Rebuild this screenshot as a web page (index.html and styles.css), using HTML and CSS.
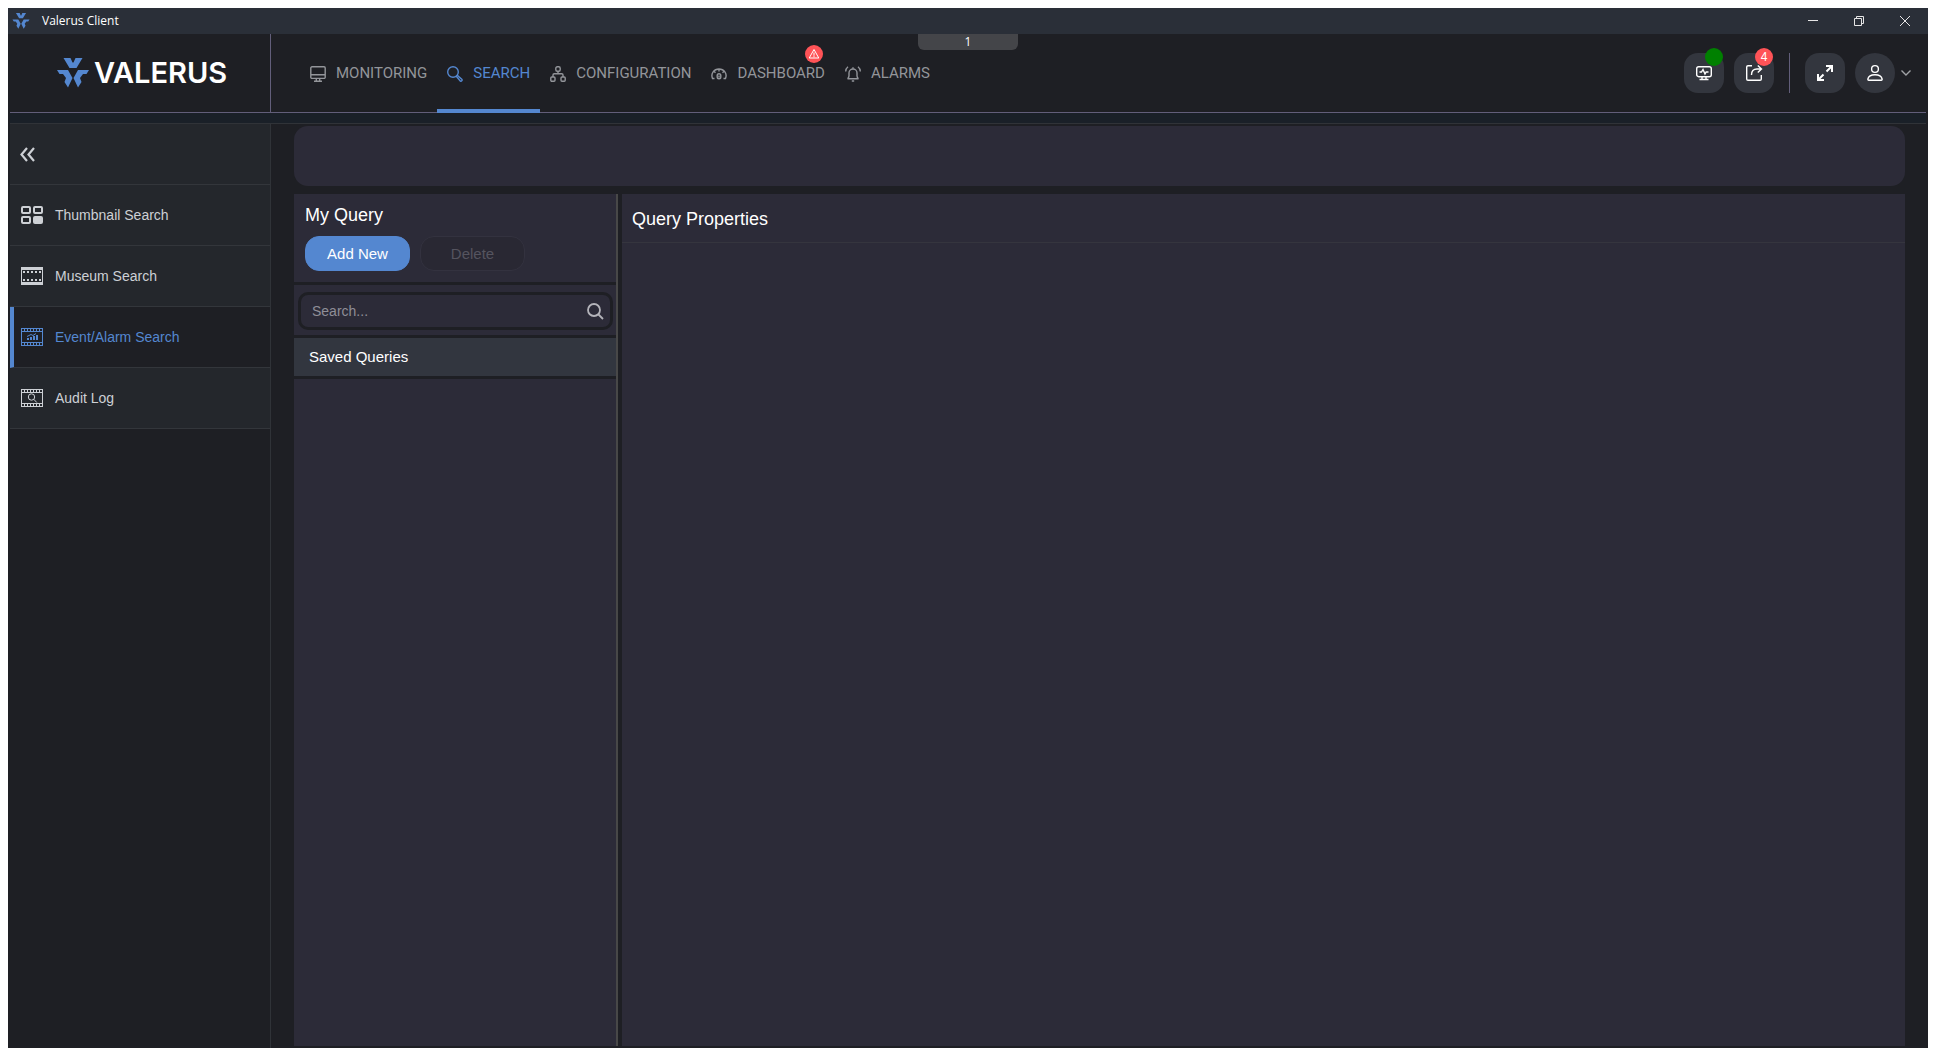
FILE: index.html
```html
<!DOCTYPE html>
<html lang="en">
<head>
<meta charset="utf-8">
<title>Valerus Client</title>
<link rel="stylesheet" href="styles.css">
</head>
<body>
<svg class="defs" aria-hidden="true">
  <symbol id="mark" viewBox="0 0 32 30">
    <path d="M6.500 0h7l2 4.500h1l2-4.500h7l-6 10h-7z M0 12h11l4.500 8-4.500 9.500L7.500 24l1.500-4-3-4H2.500z M32 12H21l-4.500 8 4.500 9.500 3.500-5.500-1.500-4 3-4h3.500z"/>
  </symbol>
  <symbol id="film" viewBox="0 0 22 18">
    <path fill="none" stroke="currentColor" d="M.5 0v18M21.500 0v18M0 .5h22M0 3.500h22M0 14.500h22M0 17.500h22M3.500 0v4M6.500 0v4M9.500 0v4M12.500 0v4M15.500 0v4M18.500 0v4M3.500 14v4M6.500 14v4M9.500 14v4M12.500 14v4M15.500 14v4M18.500 14v4"/>
  </symbol>
</svg>
<div class="window">
  <div class="titlebar">
    <svg class="app-mark"><use href="#mark"/></svg>
    <span class="app-name">Valerus Client</span>
    <div class="window-buttons">
      <button type="button" aria-label="Minimize"><svg width="10" height="10"><path d="M0 4.500h10"/></svg></button>
      <button type="button" aria-label="Restore"><svg width="10" height="10"><path d="M.5 2.500h7v7h-7zM2.500 2.500v-2h7v7h-2"/></svg></button>
      <button type="button" aria-label="Close"><svg width="10" height="10"><path d="M0 0l10 10M10 0L0 10"/></svg></button>
    </div>
  </div>

  <header class="header">
    <div class="brand">
      <svg class="brand-mark"><use href="#mark"/></svg>
      <span class="brand-name">VALERUS</span>
    </div>
    <nav class="tabs">
      <a class="tab" href="#monitoring">
        <svg width="16" height="16"><path d="M2 .8h12a1.200 1.200 0 0 1 1.200 1.200v9.200a1.200 1.200 0 0 1-1.200 1.200H2A1.200 1.200 0 0 1 .8 11.200V2A1.200 1.200 0 0 1 2 .8zM1 8.800h14M6.300 12.500v2.700M9.700 12.500v2.700M4 15.300h8"/></svg>MONITORING</a>
      <a class="tab active" href="#search" aria-current="page">
        <svg width="16" height="16"><circle cx="6" cy="6" r="5.300"/><path d="M9.500 10.500l1-1 4.500 4a1.200 1.200 0 0 1-1.600 1.600z"/></svg>SEARCH</a>
      <a class="tab" href="#configuration">
        <svg width="16" height="16"><rect x="5.800" y=".8" width="4.400" height="4.400" rx="1.500"/><rect x=".8" y="11" width="4.200" height="4.200" rx="1"/><rect x="11" y="11" width="4.200" height="4.200" rx="1"/><path d="M8 5.200v2.500M3 11V9q0-1.300 1.300-1.300h7.400Q13 7.700 13 9v2"/></svg>CONFIGURATION</a>
      <a class="tab" href="#dashboard">
        <svg width="16" height="16"><path d="M3.500 12.500H1.500C-.5 7.500 3 3 8 3s8.500 4.500 6.500 9.500h-2M8 3.500v2M3.200 5.500l1.300 1.200M12.800 5.500l-1.300 1.200"/><rect x="6.200" y="7.800" width="3.600" height="5" rx="1.800"/><path d="M8 9.500v2"/></svg>DASHBOARD
        <span class="badge alert"><svg width="12" height="12"><path d="M6 1.500L10.800 10H1.200zM6 4.500v3.200M6 8.200v1"/></svg></span></a>
      <a class="tab" href="#alarms">
        <svg width="16" height="16"><path d="M2.500 12.700h11M2.500 12.700q1.500-1.200 1.500-3V7a4 4 0 0 1 8 0v2.700q0 1.800 1.500 3M8 3V1.300M6.800 15h2.400M.7 5.500Q.8 2.500 3 .8M15.300 5.500Q15.200 2.500 13 .8"/></svg>ALARMS</a>
    </nav>
    <div class="tools">
      <button class="tool" type="button" aria-label="System health">
        <svg width="18" height="18"><rect x="1.700" y="2.700" width="14.600" height="10" rx="2"/><path d="M4.500 8h2L8 5.500l2 4.500 1.200-2h2.300M7 13v2.500M11 13v2.500M4.500 15.500h9"/></svg>
        <span class="badge ok"></span></button>
      <button class="tool" type="button" aria-label="Exports">
        <svg width="18" height="18"><path d="M7 1.700H3Q1.700 1.700 1.700 3v12q0 1.300 1.300 1.300h12q1.300 0 1.300-1.300v-4M6.500 11C6.500 7 8.500 5 12 5h4M12.800 1.500L16.500 5l-3.700 3.500"/></svg>
        <span class="badge count">4</span></button>
      <span class="rule"></span>
      <button class="tool" type="button" aria-label="Full screen">
        <svg width="18" height="18" class="bold"><path d="M10 2h6v6M16 2l-5.500 5.500M2 10v6h6M2 16l5.500-5.500"/></svg></button>
      <div class="account">
        <button class="tool round" type="button" aria-label="Account">
          <svg width="18" height="18"><circle cx="9" cy="5" r="3.400"/><path d="M2.800 16.300c-.8 0-1-.5-.9-1.300C2.500 12 5 10.800 9 10.800s6.500 1.200 7.100 4.200c.1.800-.1 1.300-.9 1.300z"/></svg></button>
        <svg class="caret" width="10" height="6"><path d="M.5.5L5 5 9.500.5"/></svg>
      </div>
    </div>
    <button class="screen-handle" type="button">1</button>
  </header>

  <div class="body">
    <aside class="sidebar">
      <button class="collapse" type="button" aria-label="Collapse menu"><svg width="15" height="15"><path d="M7 1L1.500 7.500 7 14M14 1L8.500 7.500 14 14"/></svg></button>
      <a class="side-item" href="#thumbnail"><svg width="22" height="18"><g fill="none" stroke="currentColor" stroke-width="2"><rect x="1" y="1" width="8" height="6" rx="1"/><rect x="13" y="1" width="8" height="6" rx="1"/><rect x="1" y="11" width="8" height="6" rx="1"/></g><rect x="12" y="10" width="10" height="8" rx="2" fill="currentColor"/></svg>Thumbnail Search</a>
      <a class="side-item" href="#museum"><svg width="22" height="18"><path fill="none" stroke="currentColor" d="M.5 0v18M21.500 0v18"/><path fill="none" stroke="currentColor" stroke-width="3" d="M0 1.500h22M0 16.500h22"/><path fill="none" stroke="currentColor" stroke-width="2" stroke-dasharray="2 2" d="M2 5h18M2 13h18"/></svg>Museum Search</a>
      <a class="side-item active" href="#event" aria-current="page"><svg width="22" height="18"><use href="#film"/><path fill="currentColor" d="M6 10h2v2H6zM9 9h2v3H9zM12 8h2v4h-2zM15 7h2v5h-2z"/><path fill="none" stroke="currentColor" d="M6 8.500l4-2 2 1 3-2"/></svg>Event/Alarm Search</a>
      <a class="side-item" href="#audit"><svg width="22" height="18"><use href="#film"/><circle cx="10.500" cy="8" r="3.200" fill="none" stroke="currentColor"/><path fill="none" stroke="currentColor" d="M12.800 10.300l3 3.200"/></svg>Audit Log</a>
    </aside>
    <main class="main">
      <div class="toolbar"></div>
      <div class="panels">
        <section class="queries">
          <div class="queries-head">
            <h2>My Query</h2>
            <div class="actions">
              <button class="btn primary" type="button">Add New</button>
              <button class="btn" type="button" disabled>Delete</button>
            </div>
          </div>
          <div class="search-row">
            <label class="search">
              <input type="text" placeholder="Search..." aria-label="Search queries">
              <svg width="17" height="17"><circle cx="7" cy="7" r="6"/><path d="M11.500 11.500L16 16"/></svg>
            </label>
          </div>
          <h3>Saved Queries</h3>
        </section>
        <div class="splitter"></div>
        <section class="properties">
          <h2>Query Properties</h2>
        </section>
      </div>
    </main>
  </div>
</div>
</body>
</html>
```
FILE: styles.css
```css
* { box-sizing: border-box; }

body {
  margin: 0;
  padding: 8px;
  height: 100vh;
  background: #fff;
  color: #fff;
  font-family: "Liberation Sans", Arial, sans-serif;
  font-size: 14px;
}

h2, h3 { margin: 0; font-weight: 400; }
a { color: inherit; text-decoration: none; }
button { margin: 0; padding: 0; border: 0; background: none; color: inherit; font: inherit; }
svg { display: block; flex: none; }
.defs { position: absolute; width: 0; height: 0; }

.window {
  display: flex;
  flex-direction: column;
  height: 100%;
  background: #1e1f24;
}

/* Title bar */
.titlebar {
  display: flex;
  align-items: center;
  flex: none;
  height: 26px;
  padding-left: 3px;
  background: #2a2f38;
  font-family: "Open Sans", "Noto Sans", sans-serif;
  font-size: 12px;
  line-height: 16px;
}
.app-mark { width: 20px; height: 16px; fill: #5487d0; }
.app-name { margin-left: 11px; }
.window-buttons { display: flex; margin-left: auto; }
.window-buttons button { display: grid; place-items: center; width: 46px; height: 26px; }
.window-buttons path { fill: none; stroke: #e6e6e6; }

/* Header */
.header {
  position: relative;
  display: flex;
  flex: none;
  height: 79px;
  margin: 0 2px;
  border-bottom: 1px solid #625e7a;
}
.brand {
  display: flex;
  align-items: center;
  width: 261px;
  padding-left: 46px;
  border-right: 1px solid #625e7a;
}
.brand-mark { width: 34px; height: 30px; fill: #5487d0; }
.brand-name {
  margin-left: 4px;
  font-family: Inter, sans-serif;
  font-size: 29px;
  font-weight: 600;
  line-height: 32px;
}
.tabs { display: flex; padding-left: 29px; }
.tab {
  position: relative;
  display: flex;
  align-items: center;
  gap: 10px;
  height: 79px;
  padding: 0 10px;
  border-bottom: 4px solid transparent;
  border-top: 2px solid transparent;
  color: #93959a;
  font-family: Roboto, sans-serif;
  font-size: 15px;
  line-height: 18px;
}
.tab > svg { margin-top: 2px; }
.tab svg, .tool svg, .caret { fill: none; stroke: currentColor; stroke-width: 1.4; }
.tab.active { border-bottom-color: #5487d0; color: #5487d0; }

.badge {
  position: absolute;
  display: grid;
  place-items: center;
  width: 18px;
  height: 18px;
  border-radius: 9px;
  background: #ff5357;
  color: #fff;
  font-size: 12px;
}
.badge.alert { top: 9px; right: 12px; }
.badge.alert svg { stroke-width: 1; }
.badge.ok, .badge.count { top: -5px; right: 1px; }
.badge.ok { background: #008000; }

.tools { display: flex; align-items: center; gap: 10px; margin-left: auto; padding-right: 15px; }
.tool {
  position: relative;
  display: grid;
  place-items: center;
  width: 40px;
  height: 40px;
  border-radius: 14px;
  background: #33363e;
}
.tool.round { border-radius: 20px; }
.tool .bold { stroke-width: 2; }
.rule { width: 1px; height: 40px; margin: 0 5px; background: #625e7a; }
.account { display: flex; align-items: center; gap: 6px; }
.caret { color: #a0a2a6; }
.screen-handle {
  position: absolute;
  top: 0;
  left: 50%;
  width: 100px;
  height: 16px;
  margin-left: -50px;
  border-radius: 0 0 6px 6px;
  background: #444549;
  font-family: "Open Sans", "Noto Sans", sans-serif;
  font-size: 12px;
  line-height: 16px;
}

/* Body */
.body {
  display: flex;
  flex: 1;
  min-height: 0;
  margin: 0 2px;
  border-top: 10px solid #1a2028;
}
.sidebar {
  width: 261px;
  border-top: 1px solid #303338;
  border-right: 1px solid #303338;
}
.collapse, .side-item {
  display: flex;
  align-items: center;
  width: 100%;
  height: 61px;
  border-bottom: 1px solid #33363b;
  background: #24272c;
  color: #cdd0d5;
}
.collapse { padding-left: 10px; }
.collapse path { fill: none; stroke: currentColor; stroke-width: 2.2; }
.side-item { gap: 12px; padding-left: 11px; }
.side-item.active {
  padding-left: 7px;
  border-left: 4px solid #5487d0;
  background: #1e1f24;
  color: #5487d0;
}

.main {
  display: flex;
  flex: 1;
  flex-direction: column;
  min-width: 0;
  padding: 2px 21px 2px 23px;
  border-top: 1px solid #303338;
}
.toolbar { flex: none; height: 60px; border-radius: 14px; background: #2c2b38; }
.panels { display: flex; flex: 1; min-height: 0; margin-top: 8px; }
.queries { width: 322px; background: #2c2b38; }
.queries h2, .properties h2 { font-size: 18px; line-height: 22px; }
.queries-head { height: 91px; padding: 10px 11px 0; border-bottom: 3px solid #1e1f24; }
.actions { display: flex; gap: 10px; margin-top: 10px; }
.btn {
  width: 105px;
  height: 35px;
  border-radius: 14px;
  border: 1px solid #33323f;
  background: #292833;
  color: #55545f;
  font-size: 15px;
}
.btn.primary { border-color: #5487d0; background: #5487d0; color: #fff; }
.search-row { padding: 7px 3px 5px 4px; border-bottom: 3px solid #1e1f24; }
.search {
  display: flex;
  align-items: center;
  height: 38px;
  padding: 0 6px 0 11px;
  border: 3px solid #1e1f24;
  border-radius: 10px;
}
.search input {
  flex: 1;
  min-width: 0;
  padding: 0;
  border: 0;
  outline: 0;
  background: none;
  color: #fff;
  font: inherit;
}
.search input::placeholder { color: #8f8e97; opacity: 1; }
.search svg { fill: none; stroke: #b4b4ba; stroke-width: 1.8; }
.queries h3 {
  height: 41px;
  padding-left: 15px;
  border-bottom: 3px solid #1e1f24;
  background: #32363f;
  font-size: 15px;
  line-height: 38px;
}
.splitter { width: 6px; border-left: 2px solid #484848; }
.properties { flex: 1; min-width: 0; background: #2c2b38; }
.properties h2 { padding: 14px 10px 12px; border-bottom: 1px solid #35353e; }
```
